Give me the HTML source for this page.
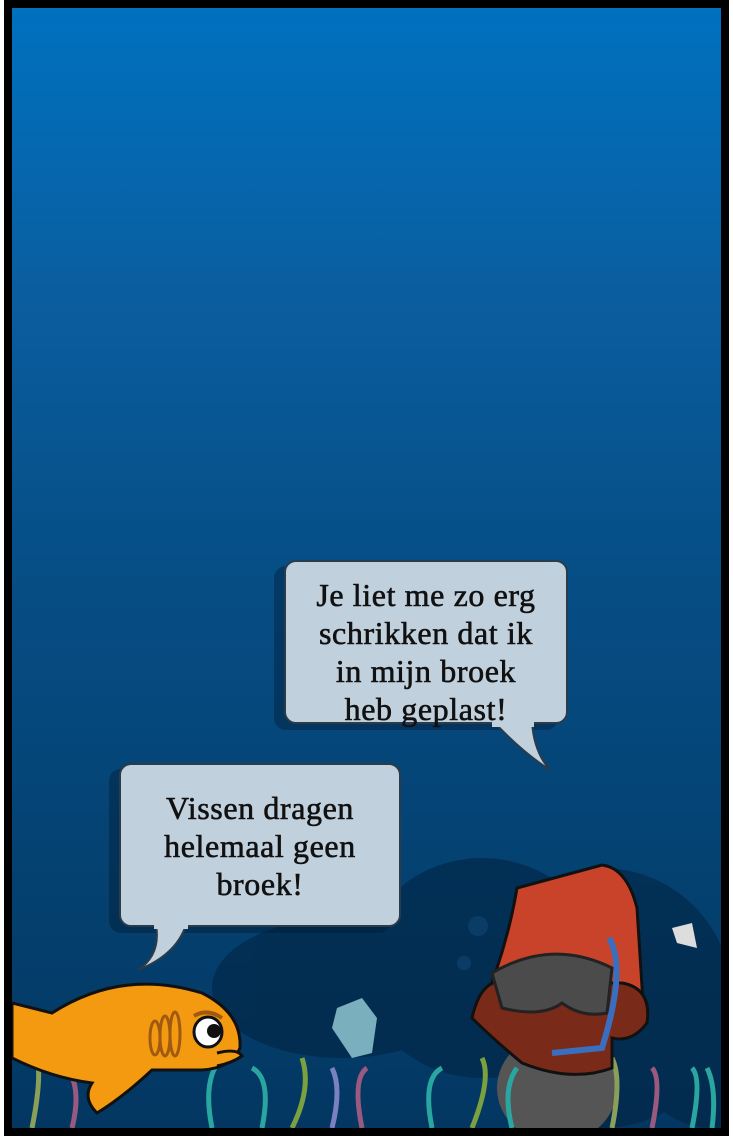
<!DOCTYPE html>
<html><head><meta charset="utf-8"><style>
body{margin:0;width:733px;height:1144px;background:#fff;position:relative;overflow:hidden;font-family:"Liberation Serif",serif}
.frame{position:absolute;left:4px;top:0;width:709px;height:1120px;border:8px solid #000;box-sizing:content-box;background:linear-gradient(#0071bf 0%,#0a5ea0 25%,#064e86 50%,#04406f 80%,#033762 100%);overflow:hidden}
.b{position:absolute;background:#c1d0dd;border:2px solid #2a3b4a;border-radius:12px;box-shadow:-10px 6px 0 rgba(0,20,40,.35);text-align:center;font-size:32px;letter-spacing:.6px;-webkit-text-stroke:.6px #111;line-height:38px;color:#111;white-space:nowrap}
</style></head><body>
<div class="frame">
<svg width="709" height="1120" style="position:absolute;left:0;top:0">
 <g fill="#02223f" opacity=".55">
  <ellipse cx="330" cy="980" rx="130" ry="70"/>
  <ellipse cx="470" cy="960" rx="120" ry="110"/>
  <ellipse cx="590" cy="990" rx="130" ry="130"/>
  <ellipse cx="700" cy="1040" rx="80" ry="80"/>
 </g>
 <circle cx="466" cy="918" r="10" fill="#0b3c66"/>
 <circle cx="452" cy="955" r="7" fill="#0b3c66"/>
 <ellipse cx="545" cy="1080" rx="60" ry="55" fill="#555"/>
 <g stroke-width="5" fill="none">
  <path d="M20 1120 Q30 1070 25 1050" stroke="#8aa05a"/>
  <path d="M60 1120 Q70 1080 55 1060" stroke="#9a5a80"/>
  <path d="M200 1120 Q190 1070 210 1050" stroke="#2aa6a0"/>
  <path d="M250 1120 Q260 1070 240 1060" stroke="#2aa6a0"/>
  <path d="M280 1120 Q300 1080 290 1050" stroke="#7aa040"/>
  <path d="M320 1120 Q330 1080 320 1060" stroke="#7a80c0"/>
  <path d="M350 1120 Q340 1070 355 1060" stroke="#9a5a80"/>
  <path d="M420 1120 Q410 1070 430 1060" stroke="#2aa6a0"/>
  <path d="M460 1120 Q480 1070 470 1050" stroke="#7aa040"/>
  <path d="M500 1120 Q490 1080 505 1060" stroke="#2aa6a0"/>
  <path d="M600 1120 Q610 1070 600 1050" stroke="#8aa05a"/>
  <path d="M640 1120 Q650 1070 640 1060" stroke="#9a5a80"/>
  <path d="M680 1120 Q690 1070 680 1060" stroke="#2aa6a0"/>
  <path d="M700 1120 Q705 1080 695 1060" stroke="#2aa6a0"/>
 </g>
 <g stroke="#111" stroke-width="3">
  <path d="M0 995 L40 1005 Q110 960 190 985 Q230 1005 228 1040 Q220 1060 190 1062 L140 1062 Q110 1090 85 1105 Q70 1090 80 1075 Q40 1070 0 1050 Z" fill="#f39a10"/>
  <path d="M205 1045 Q225 1040 230 1048 Q220 1055 205 1058" fill="#f39a10"/>
 </g>
 <g fill="none" stroke="#a05a10" stroke-width="3"><ellipse cx="143" cy="1030" rx="5" ry="17"/><ellipse cx="153" cy="1028" rx="5" ry="20"/><ellipse cx="163" cy="1026" rx="5" ry="22"/></g>
 <ellipse cx="196" cy="1024" rx="14" ry="15" fill="#fff" stroke="#111" stroke-width="3"/>
 <circle cx="202" cy="1023" r="7" fill="#111"/>
 <path d="M182 1008 Q195 1000 210 1010" stroke="#a05a10" stroke-width="4" fill="none"/>
 <path d="M325 1000 L350 990 L365 1010 L360 1045 L340 1050 L320 1020 Z" fill="#8fc8d0" opacity=".85"/>
 <path d="M505 880 L590 857 Q615 860 625 900 L632 1010 L470 1000 Q495 940 505 880 Z" fill="#c9432a" stroke="#111" stroke-width="3"/>
 <path d="M460 1010 Q470 965 500 975 L610 975 Q640 980 635 1015 Q620 1035 600 1030 L600 1060 Q560 1075 510 1055 Q480 1030 460 1010 Z" fill="#7a2a18" stroke="#111" stroke-width="3"/>
 <path d="M480 965 Q540 930 600 960 L595 1005 Q570 1010 550 995 Q530 1010 490 1000 Z" fill="#4b4b4b" stroke="#222" stroke-width="3"/>
 <path d="M597 930 Q615 960 590 1040 L540 1045" stroke="#3a6fc0" stroke-width="6" fill="none"/>
 <path d="M660 920 L680 915 L685 940 L665 935 Z" fill="#ddd"/>
</svg>
<div class="b" style="left:272px;top:552px;width:284px;height:164px;padding-top:14px;box-sizing:border-box">Je liet me zo erg<br>schrikken dat ik<br>in mijn broek<br>heb geplast!</div>
<svg width="60" height="50" style="position:absolute;left:480px;top:714px"><path d="M2 0 Q30 30 58 48 Q42 30 40 0 Z" fill="#c1d0dd" stroke="#2a3b4a" stroke-width="2"/><path d="M0 0 L42 0 L42 5 L0 5Z" fill="#c1d0dd"/></svg>
<div class="b" style="left:107px;top:755px;width:282px;height:164px;padding-top:24px;box-sizing:border-box">Vissen dragen<br>helemaal geen<br>broek!</div>
<svg width="60" height="50" style="position:absolute;left:124px;top:917px"><path d="M50 0 Q40 30 2 45 Q25 30 20 0 Z" fill="#c1d0dd" stroke="#2a3b4a" stroke-width="2"/><path d="M18 0 L52 0 L52 4 L18 4Z" fill="#c1d0dd"/></svg>
</div>
</body></html>
